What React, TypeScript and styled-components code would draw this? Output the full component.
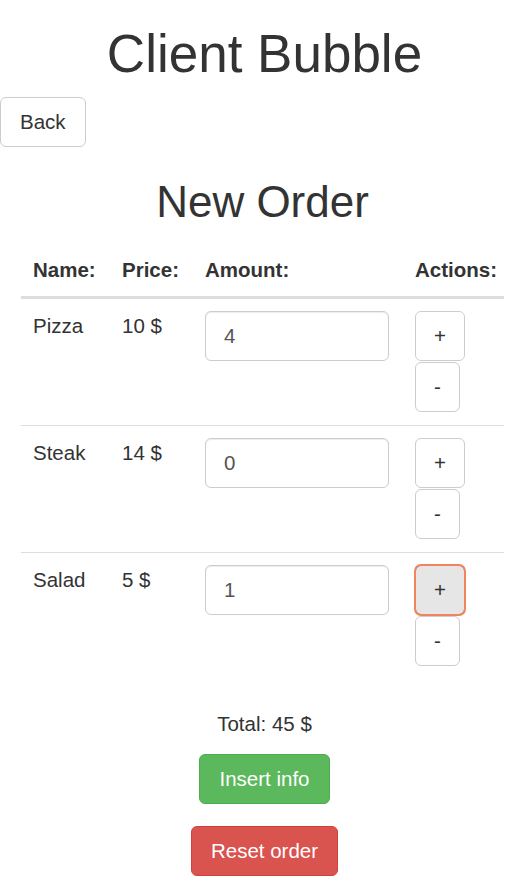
import React, { useState } from 'react'
import styled, { createGlobalStyle } from 'styled-components'

type Item = { name: string; price: number; amount: number }

const initialItems: Item[] = [
  { name: 'Pizza', price: 10, amount: 4 },
  { name: 'Steak', price: 14, amount: 0 },
  { name: 'Salad', price: 5, amount: 1 },
]

const App: React.FC = () => {
  const [items, setItems] = useState<Item[]>(initialItems)

  const change = (index: number, delta: number) => {
    setItems(items.map((it, i) => (i === index ? { ...it, amount: Math.max(0, it.amount + delta) } : it)))
  }

  const total = items.reduce((sum, it) => sum + it.price * it.amount, 0)

  return (
    <>
      <GlobalStyle />
      <Page>
        <Title>Client Bubble</Title>
        <BackButton>Back</BackButton>
        <Content>
          <Subtitle>New Order</Subtitle>
          <Table>
            <thead>
              <tr>
                <HeadCell $width={89}>Name:</HeadCell>
                <HeadCell $width={83}>Price:</HeadCell>
                <HeadCell $width={210}>Amount:</HeadCell>
                <HeadCell $width={101}>Actions:</HeadCell>
              </tr>
            </thead>
            <tbody>
              {items.map((it, i) => (
                <Row key={it.name}>
                  <Cell>{it.name}</Cell>
                  <Cell>{it.price} $</Cell>
                  <Cell>
                    <AmountInput value={it.amount} readOnly />
                  </Cell>
                  <Cell>
                    <Actions>
                      <SmallButton $focused={i === 2} onClick={() => change(i, 1)}>
                        +
                      </SmallButton>
                      <SmallButton onClick={() => change(i, -1)}>-</SmallButton>
                    </Actions>
                  </Cell>
                </Row>
              ))}
            </tbody>
          </Table>
        </Content>
        <Footer>
          <Total>Total: {total} $</Total>
          <ColorButton $variant="success">Insert info</ColorButton>
          <ColorButton $variant="danger" onClick={() => setItems(initialItems)}>
            Reset order
          </ColorButton>
        </Footer>
      </Page>
    </>
  )
}

const GlobalStyle = createGlobalStyle`
  body {
    margin: 0;
    background: #fff;
    color: #333;
    font-family: "Liberation Sans", Arial, sans-serif;
    font-size: 20.5px;
    line-height: 1.42857;
  }
  * {
    box-sizing: border-box;
  }
`

const Page = styled.div`
  display: flex;
  flex-direction: column;
  width: 529px;
`

const Title = styled.h1`
  margin: 25px 0 14px;
  font-size: 53px;
  font-weight: 500;
  line-height: 58px;
  text-align: center;
`

const BackButton = styled.button`
  align-self: flex-start;
  height: 50px;
  padding: 0 19px;
  font-family: inherit;
  font-size: 20.5px;
  color: #333;
  background: #fff;
  border: 1px solid #ccc;
  border-radius: 6px;
  cursor: pointer;
`

const Content = styled.div`
  padding: 0 25px 0 21px;
`

const Subtitle = styled.h2`
  margin: 31px 0 17px;
  font-size: 44px;
  font-weight: 500;
  line-height: 48px;
  text-align: center;
`

const Table = styled.table`
  width: 483px;
  border-collapse: collapse;
  border-spacing: 0;
  table-layout: fixed;
`

const HeadCell = styled.th<{ $width: number }>`
  width: ${p => p.$width}px;
  padding: 12px;
  text-align: left;
  font-weight: bold;
  vertical-align: bottom;
  border-bottom: 3px solid #ddd;
`

const Row = styled.tr`
  & + & td {
    border-top: 1px solid #ddd;
  }
`

const Cell = styled.td`
  padding: 12px 12px 13px;
  vertical-align: top;
`

const AmountInput = styled.input`
  display: block;
  width: 184px;
  height: 50px;
  padding: 0 18px;
  font-family: inherit;
  font-size: 20.5px;
  color: #555;
  background: #fff;
  border: 1px solid #ccc;
  border-radius: 6px;
  box-shadow: inset 0 1px 1px rgba(0, 0, 0, 0.075);
  outline: none;
`

const Actions = styled.div`
  display: flex;
  flex-direction: column;
  align-items: flex-start;
  gap: 1px;
`

const SmallButton = styled.button<{ $focused?: boolean }>`
  height: 50px;
  padding: 0 18px;
  font-family: inherit;
  font-size: 20.5px;
  line-height: 1;
  color: #333;
  background: ${p => (p.$focused ? '#e6e6e6' : '#fff')};
  border: 1px solid ${p => (p.$focused ? '#8c8c8c' : '#ccc')};
  border-radius: 6px;
  outline: ${p => (p.$focused ? '2px solid #f0845c' : 'none')};
  outline-offset: -1px;
  cursor: pointer;
`

const Footer = styled.div`
  display: flex;
  flex-direction: column;
  align-items: center;
  margin-top: 30px;
`

const Total = styled.div`
  line-height: 29px;
  margin-bottom: 16px;
`

const variants = {
  success: { bg: '#5cb85c', border: '#4cae4c' },
  danger: { bg: '#d9534f', border: '#d43f3a' },
}

const ColorButton = styled.button<{ $variant: 'success' | 'danger' }>`
  height: 50px;
  padding: 0 19px;
  margin-bottom: 22px;
  font-family: inherit;
  font-size: 20.5px;
  color: #fff;
  background: ${p => variants[p.$variant].bg};
  border: 1px solid ${p => variants[p.$variant].border};
  border-radius: 6px;
  cursor: pointer;
`

export default App
